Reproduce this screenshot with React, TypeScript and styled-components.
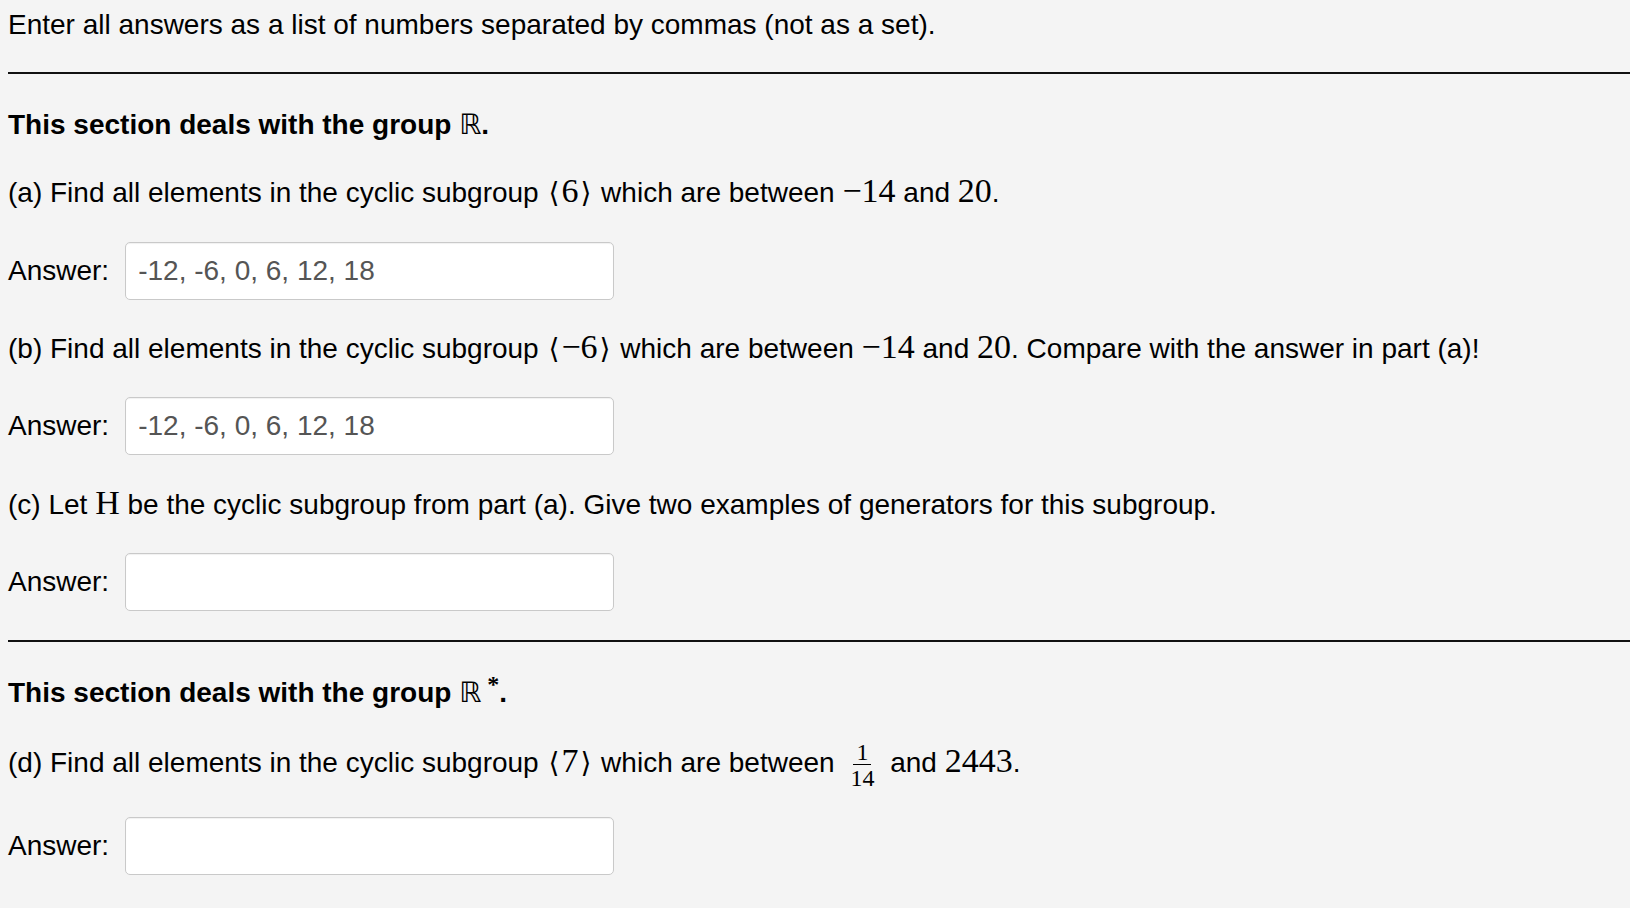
import React from 'react';
import styled, {createGlobalStyle} from "styled-components";

const GlobalStyle = createGlobalStyle`
  html, body {
    margin: 0;
    padding: 0;
    background: #f4f4f4;
  }
  body {
    font-family: "Liberation Sans", Arial, Helvetica, sans-serif;
    color: #000;
  }
`

const Page = styled.div`
  display: flex;
  flex-direction: column;
  padding: 8px 0 40px 8px;
  font-size: 28px;
  line-height: 34px;
`

const Text = styled.p<{ $top?: number }>`
  margin: ${p => p.$top ?? 32}px 0 0 0;
  white-space: nowrap;
`

const Heading = styled.h2<{ $top?: number }>`
  margin: ${p => p.$top ?? 34}px 0 0 0;
  font-size: 28px;
  line-height: 34px;
  font-weight: bold;
  white-space: nowrap;
`

const Rule = styled.hr<{ $top?: number }>`
  margin: ${p => p.$top ?? 30}px 0 0 0;
  border: none;
  height: 2px;
  background: #111;
`

const AnswerRow = styled.div<{ $top?: number }>`
  display: flex;
  align-items: center;
  gap: 16px;
  margin-top: ${p => p.$top ?? 32}px;
`

const Label = styled.span`
  line-height: 34px;
`

const AnswerInput = styled.input`
  box-sizing: border-box;
  width: 489px;
  height: 58px;
  padding: 0 12px;
  border: 1px solid #c9c9c9;
  border-radius: 5px;
  background: #fff;
  box-shadow: inset 0 1px 1px rgba(0, 0, 0, 0.06);
  font-family: "Liberation Sans", Arial, sans-serif;
  font-size: 28px;
  color: #555;
  outline: none;
`

const Math = styled.span`
  font-family: "Liberation Serif", "Times New Roman", serif;
  font-size: 34px;
  line-height: 0;
`

const Bracket = styled.span`
  font-family: "DejaVu Serif", "DejaVu Sans", serif;
  font-size: 28px;
  font-weight: normal;
  line-height: 0;
  margin: 0 2px;
`

const Reals = styled.span`
  font-family: "DejaVu Sans", sans-serif;
  font-weight: normal;
  font-size: 28px;
`

const Star = styled.sup`
  font-family: "Liberation Serif", serif;
  font-size: 24px;
  vertical-align: 10px;
  line-height: 0;
  margin-left: 6px;
`

const Fraction = styled.span`
  display: inline-flex;
  flex-direction: column;
  align-items: center;
  vertical-align: middle;
  margin: -14px 5px;
  font-family: "Liberation Serif", serif;
  font-size: 24px;
  line-height: 22px;
`

const Numerator = styled.span`
  padding: 0 3px 1px;
  border-bottom: 1.5px solid #000;
`

const Denominator = styled.span`
  padding: 2px 3px 0;
`

const Generated = ({v}: { v: string }) => (
  <>
    <Bracket>⟨</Bracket><Math>{v}</Math><Bracket>⟩</Bracket>
  </>
)

const Answer = ({value, top}: { value?: string, top?: number }) => (
  <AnswerRow $top={top}>
    <Label>Answer:</Label>
    <AnswerInput defaultValue={value ?? ""}/>
  </AnswerRow>
)

const App = () => {
  return (
    <Page>
      <GlobalStyle/>
      <Text $top={0}>Enter all answers as a list of numbers separated by commas (not as a set).</Text>
      <Rule/>
      <Heading>This section deals with the group <Reals>ℝ</Reals>.</Heading>
      <Text $top={34}>
        (a) Find all elements in the cyclic subgroup <Generated v="6"/> which are between <Math>−14</Math> and <Math>20</Math>.
      </Text>
      <Answer value="-12, -6, 0, 6, 12, 18"/>
      <Text>
        (b) Find all elements in the cyclic subgroup <Generated v="−6"/> which are between <Math>−14</Math> and <Math>20</Math>. Compare with the answer in part (a)!
      </Text>
      <Answer value="-12, -6, 0, 6, 12, 18" top={31}/>
      <Text $top={33}>
        (c) Let <Math>H</Math> be the cyclic subgroup from part (a). Give two examples of generators for this subgroup.
      </Text>
      <Answer top={31}/>
      <Rule $top={29}/>
      <Heading>This section deals with the group <Reals>ℝ</Reals><Star>*</Star>.</Heading>
      <Text $top={36}>
        (d) Find all elements in the cyclic subgroup <Generated v="7"/> which are between{" "}
        <Fraction><Numerator>1</Numerator><Denominator>14</Denominator></Fraction> and <Math>2443</Math>.
      </Text>
      <Answer top={37}/>
    </Page>
  );
};

export default App;
